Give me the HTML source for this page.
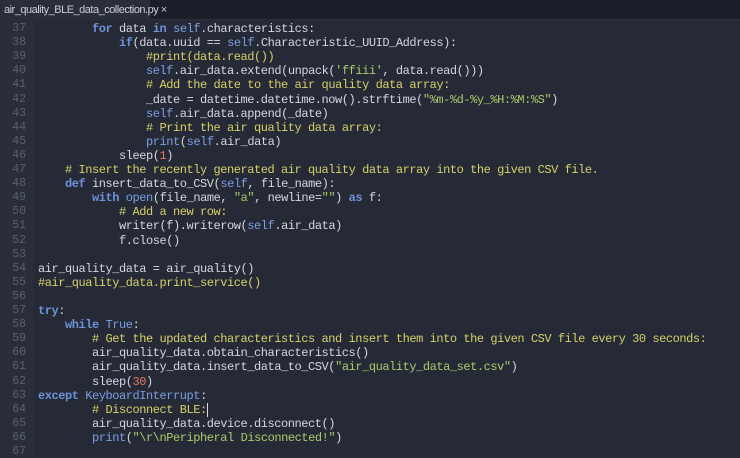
<!DOCTYPE html>
<html><head><style>
html,body{margin:0;padding:0;width:740px;height:457px;overflow:hidden;background:#262a36;}
#top{position:absolute;left:0;top:0;width:740px;height:19px;background:#1b1e29;border-bottom:1px solid #2d303c;}
#tab{position:absolute;left:0;top:0;width:150px;height:20px;background:#2a2e3a;color:#c8ccd4;font:11px "Liberation Sans",sans-serif;line-height:20px;padding-left:4px;box-sizing:border-box;letter-spacing:-0.5px;white-space:nowrap;}
#gut{position:absolute;left:0;top:20px;width:33px;height:437px;background:#2a2e3a;}
.ln{position:absolute;left:0;width:26px;text-align:right;color:#5a6070;font:11.5px "Liberation Mono",monospace;}
.cl{position:absolute;left:38px;color:#d4d7de;font:12px "Liberation Mono",monospace;letter-spacing:-0.45px;white-space:pre;}
.k{color:#6d92da;font-weight:bold}
.b{color:#7b9fe2}
.c{color:#d6d06a}
.s{color:#a8cc6c}
.n{color:#e8735e}
</style></head><body>
<div id="top"></div>
<div id="tab">air_quality_BLE_data_collection.py ×</div>
<div id="gut"></div>
<div id="code"></div>
<script>
var L=[
'        <span class="k">for</span> data <span class="k">in</span> <span class="b">self</span>.characteristics:',
'            <span class="k">if</span>(data.uuid == <span class="b">self</span>.Characteristic_UUID_Address):',
'                <span class="c">#print(data.read())</span>',
'                <span class="b">self</span>.air_data.extend(unpack(<span class="s">\'ffiii\'</span>, data.read()))',
'                <span class="c"># Add the date to the air quality data array:</span>',
'                _date = datetime.datetime.now().strftime(<span class="s">"%m-%d-%y_%H:%M:%S"</span>)',
'                <span class="b">self</span>.air_data.append(_date)',
'                <span class="c"># Print the air quality data array:</span>',
'                <span class="b">print</span>(<span class="b">self</span>.air_data)',
'            sleep(<span class="n">1</span>)',
'    <span class="c"># Insert the recently generated air quality data array into the given CSV file.</span>',
'    <span class="k">def</span> insert_data_to_CSV(<span class="b">self</span>, file_name):',
'        <span class="k">with</span> <span class="b">open</span>(file_name, <span class="s">"a"</span>, newline=<span class="s">""</span>) <span class="k">as</span> f:',
'            <span class="c"># Add a new row:</span>',
'            writer(f).writerow(<span class="b">self</span>.air_data)',
'            f.close()',
'',
'air_quality_data = air_quality()',
'<span class="c">#air_quality_data.print_service()</span>',
'',
'<span class="k">try</span>:',
'    <span class="k">while</span> <span class="b">True</span>:',
'        <span class="c"># Get the updated characteristics and insert them into the given CSV file every 30 seconds:</span>',
'        air_quality_data.obtain_characteristics()',
'        air_quality_data.insert_data_to_CSV(<span class="s">"air_quality_data_set.csv"</span>)',
'        sleep(<span class="n">30</span>)',
'<span class="k">except</span> <span class="b">KeyboardInterrupt</span>:',
'        <span class="c"># Disconnect BLE:</span><span style="border-left:1px solid #ddd"></span>',
'        air_quality_data.device.disconnect()',
'        <span class="b">print</span>(<span class="s">"\\r\\nPeripheral Disconnected!"</span>)',
''];
var h='';
for(var i=0;i<L.length;i++){var y=(22+i*14.1).toFixed(1);
h+='<div class="ln" style="top:'+y+'px">'+(37+i)+'</div><div class="cl" style="top:'+y+'px">'+L[i]+'</div>';}
document.getElementById('code').innerHTML=h;
</script>
</body></html>
